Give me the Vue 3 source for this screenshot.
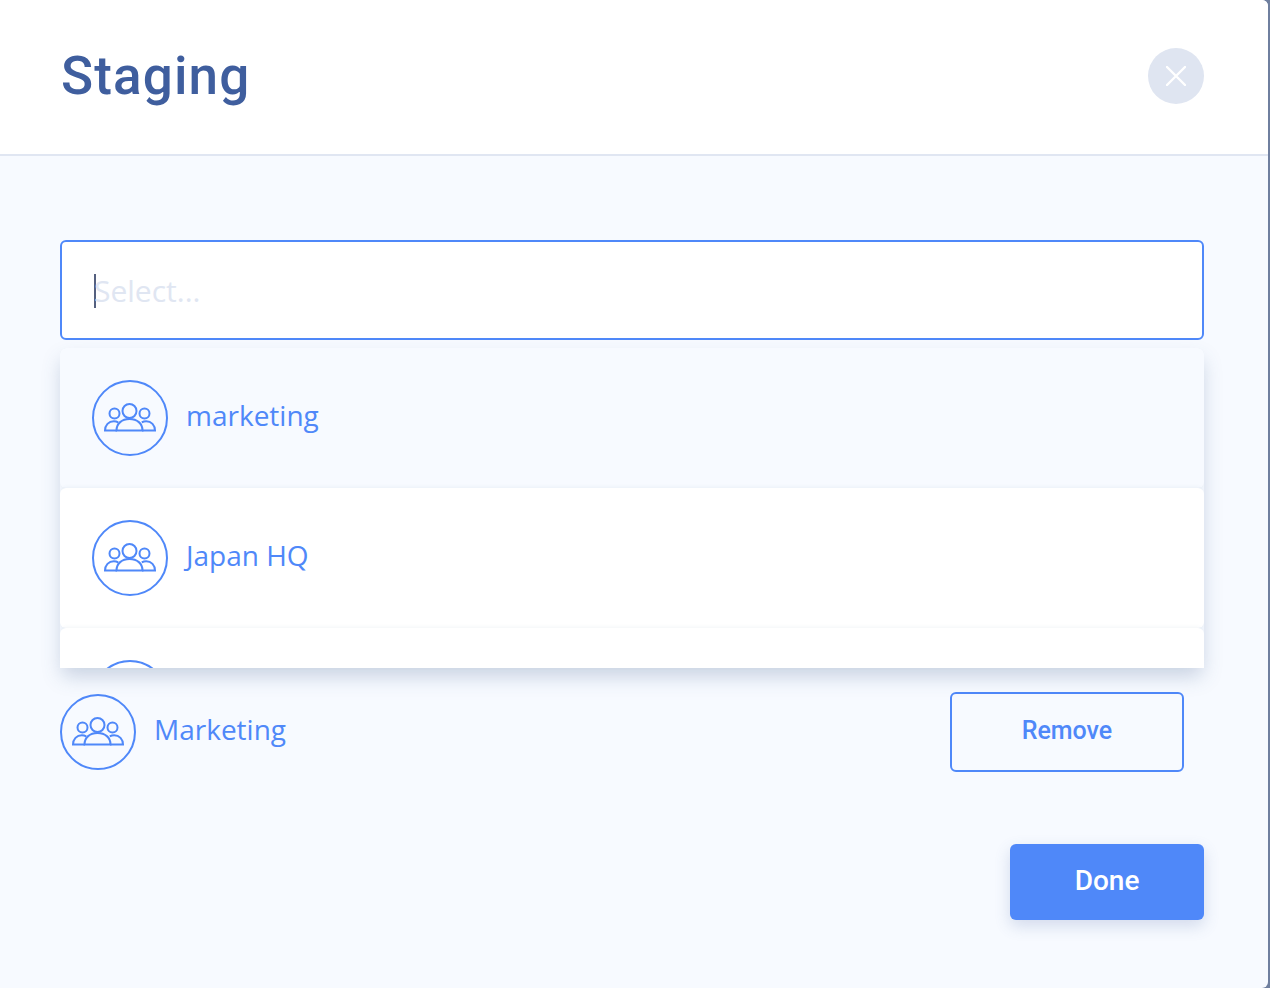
<script setup>
const options = [{ id: 1, name: 'marketing', active: true }, { id: 2, name: 'Japan HQ' }, { id: 3, name: '' }]
</script>

<template>
  <div class="page">
    <section class="modal">
      <header class="head">
        <h1 class="title">Staging</h1>
        <button class="close" aria-label="Close">
          <svg width="20" height="20" viewBox="0 0 20 20"><path d="M1 1 19 19M19 1 1 19" stroke="#fff" stroke-width="2.4" stroke-linecap="round" /></svg>
        </button>
      </header>
      <div class="body">
        <div class="select-wrap">
          <div class="select"><span class="caret"></span><span class="placeholder">Select...</span></div>
          <div class="menu">
            <div v-for="o in options" :key="o.id" class="option" :class="{ active: o.active }">
              <span class="avatar">
                <svg width="54" height="30" viewBox="0 0 54 30" fill="none" stroke="#4f88f9" stroke-width="2">
                  <circle cx="11.500" cy="10.500" r="5" />
                  <circle cx="41.500" cy="10.500" r="5" />
                  <circle cx="26.500" cy="8" r="7" />
                  <path d="M14 27.500H2c0-5.400 3.700-9.300 8.800-9.300 1.600 0 3.100.4 4.400 1.200M39 27.500h13c0-5.400-3.700-9.300-8.800-9.300-1.600 0-3.100.4-4.400 1.200" />
                  <path d="M13.500 27.500h26c0-7-5.400-11.500-13-11.500s-13 4.500-13 11.500Z" />
                </svg>
              </span>
              <span v-if="o.name" class="name">{{ o.name }}</span>
            </div>
          </div>
        </div>
        <div class="row">
          <div class="member">
            <span class="avatar">
              <svg width="54" height="30" viewBox="0 0 54 30" fill="none" stroke="#4f88f9" stroke-width="2">
                <circle cx="11.500" cy="10.500" r="5" />
                <circle cx="41.500" cy="10.500" r="5" />
                <circle cx="26.500" cy="8" r="7" />
                <path d="M14 27.500H2c0-5.400 3.700-9.300 8.800-9.300 1.600 0 3.100.4 4.400 1.200M39 27.500h13c0-5.400-3.700-9.300-8.800-9.300-1.600 0-3.100.4-4.400 1.200" />
                <path d="M13.500 27.500h26c0-7-5.400-11.500-13-11.500s-13 4.500-13 11.500Z" />
              </svg>
            </span>
            <span class="name">Marketing</span>
          </div>
          <button class="remove">Remove</button>
        </div>
        <div class="foot"><button class="done">Done</button></div>
      </div>
    </section>
  </div>
</template>

<style>
html, body { margin: 0; background: #fff; }
</style>

<style scoped>
.page {
  width: 1270px;
  height: 988px;
  overflow: hidden;
  background: #6f7f9f;
  font-family: "Open Sans", "Noto Sans", sans-serif;
}
.modal {
  width: 1268px;
  height: 988px;
  display: flex;
  flex-direction: column;
  background: #f7faff;
  border-radius: 0 6px 6px 0;
  overflow: hidden;
}
.head {
  height: 152px;
  flex: none;
  box-sizing: content-box;
  display: flex;
  align-items: center;
  justify-content: space-between;
  padding: 0 64px 2px 61px;
  background: #fff;
  border-bottom: 2px solid #e0e6f2;
}
.title {
  margin: 0;
  font-family: Roboto, sans-serif;
  font-size: 53px;
  font-weight: 500;
  line-height: 64px;
  letter-spacing: 1.15px;
  color: #3f5e9e;
}
.close {
  width: 56px;
  height: 56px;
  padding: 0;
  border: 0;
  border-radius: 50%;
  background: #dfe5f1;
  display: flex;
  align-items: center;
  justify-content: center;
}
.body {
  flex: 1;
  padding: 84px 64px 0 60px;
}
.select-wrap { position: relative; }
.select {
  box-sizing: border-box;
  height: 100px;
  display: flex;
  align-items: center;
  padding-left: 32px;
  background: #fff;
  border: 2px solid #4f88f9;
  border-radius: 6px;
}
.caret {
  width: 2px;
  height: 34px;
  margin-top: 2px;
  background: #55607f;
}
.placeholder {
  margin-left: -2px;
  margin-top: 2px;
  font-size: 30px;
  line-height: 34px;
  color: #e0e6f2;
}
.menu {
  position: absolute;
  top: 108px;
  left: 0;
  right: 0;
  height: 320px;
  overflow: hidden;
  border-radius: 6px 6px 0 0;
  box-shadow: 0 10px 20px -2px rgba(63, 94, 140, 0.26);
}
.option {
  height: 140px;
  box-sizing: border-box;
  display: flex;
  align-items: flex-start;
  gap: 18px;
  padding: 32px 32px 0;
  background: #fff;
  border-radius: 6px;
  box-shadow: 0 0 4px rgba(63, 94, 140, 0.1);
}
.option.active { background: #f7faff; }
.avatar {
  box-sizing: border-box;
  width: 76px;
  height: 76px;
  flex: none;
  display: flex;
  align-items: center;
  justify-content: center;
  border: 2px solid #4f88f9;
  border-radius: 50%;
}
.name {
  font-size: 28px;
  line-height: 70px;
  color: #4f88f9;
}
.row {
  margin-top: 352px;
  height: 80px;
  display: flex;
  align-items: center;
  justify-content: space-between;
  padding-right: 20px;
}
.member {
  display: flex;
  align-items: flex-start;
  gap: 18px;
}
.remove {
  width: 234px;
  height: 80px;
  padding: 0 0 3px;
  background: transparent;
  border: 2px solid #4f88f9;
  border-radius: 6px;
  font-family: Roboto, sans-serif;
  font-size: 25px;
  font-weight: 500;
  color: #4f88f9;
}
.foot {
  margin-top: 72px;
  display: flex;
  justify-content: flex-end;
}
.done {
  width: 194px;
  height: 76px;
  padding: 0 0 4px;
  background: #4f88f9;
  border: 0;
  border-radius: 6px;
  box-shadow: 0 6px 16px rgba(63, 94, 158, 0.2);
  font-family: Roboto, sans-serif;
  font-size: 28px;
  font-weight: 500;
  color: #fff;
}
</style>
